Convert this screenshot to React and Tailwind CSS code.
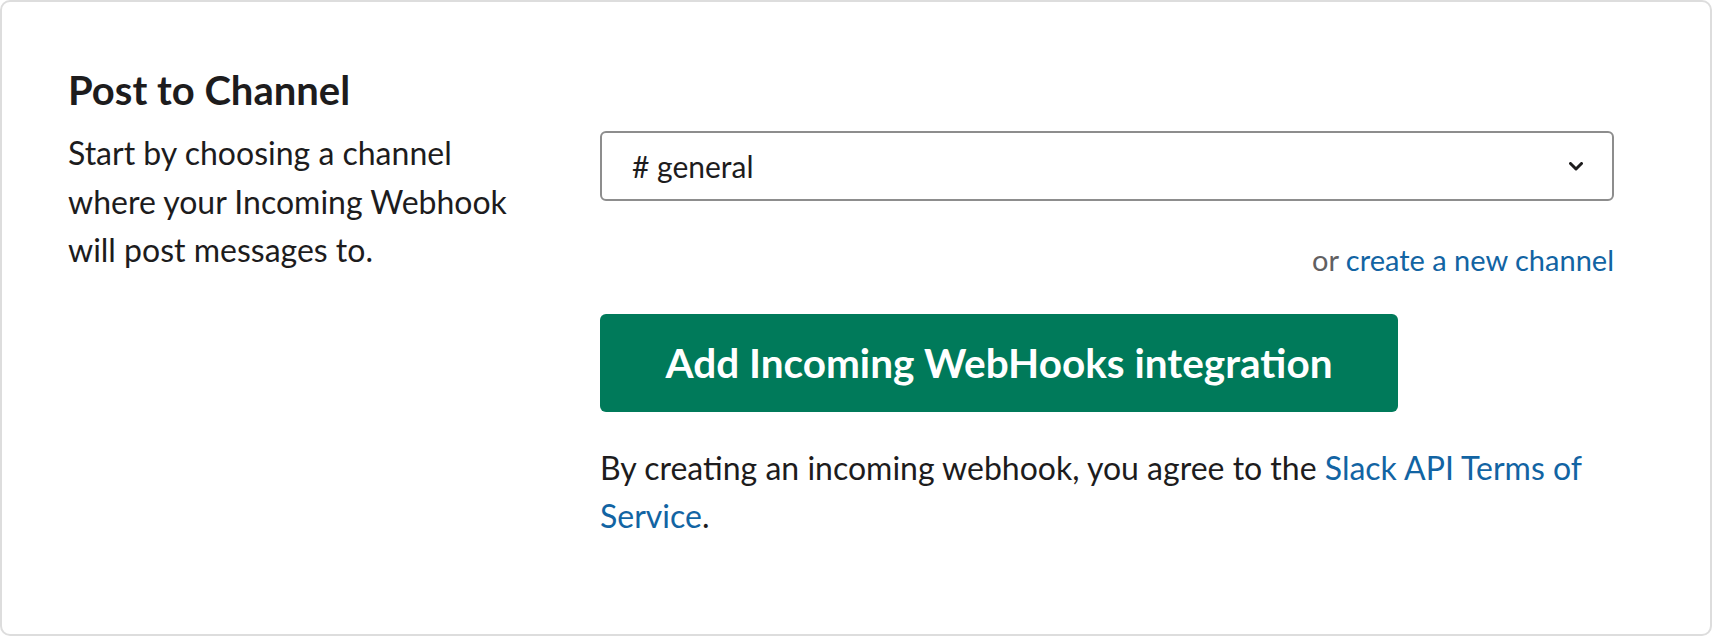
const font = { fontFamily: 'Lato, "Noto Sans", sans-serif' };

export default function App() {
  return (
    <div className="w-[1712px] h-[636px] bg-white" style={font}>
      <div className="h-full rounded-[10px] border-2 border-[#dddddd] bg-white flex pl-[66px] pr-[96px] pt-[64px]">
        {/* left: title + description */}
        <div className="w-[452px] shrink-0 text-[#1d1c1d]">
          <h3 className="text-[40px] font-bold leading-[48px]">Post to Channel</h3>
          <p className="mt-[15px] text-[32px] leading-[48.5px]">
            Start by choosing a channel where your Incoming Webhook will post messages to.
          </p>
        </div>

        {/* right: channel picker + action */}
        <div className="ml-[80px] flex-1 flex flex-col">
          <div className="mt-[65px] h-[70px] rounded-[6px] border-2 border-[#8d8d8d] flex items-center justify-between pl-[30px] pr-[29px] text-[30px] text-[#1d1c1d]">
            <span># general</span>
            <svg width="14" height="9" viewBox="0 0 14 9" fill="none">
              <path d="M1.5 1.5 7 7l5.5-5.5" stroke="#1d1c1d" strokeWidth="3" strokeLinecap="round" strokeLinejoin="round" />
            </svg>
          </div>
          <div className="mt-[41px] text-right text-[29px] leading-[36px] text-[#616061]">
            or <a className="text-[#1264a3]">create a new channel</a>
          </div>
          <button className="mt-[36px] self-start w-[798px] h-[98px] rounded-[6px] bg-[#007a5a] text-white text-[40.5px] font-bold">
            Add Incoming WebHooks integration
          </button>
          <p className="mt-[32px] text-[32px] leading-[48px] text-[#1d1c1d]">
            By creating an incoming webhook, you agree to the{' '}
            <a className="text-[#1264a3]">Slack API Terms of Service</a>.
          </p>
        </div>
      </div>
    </div>
  );
}
